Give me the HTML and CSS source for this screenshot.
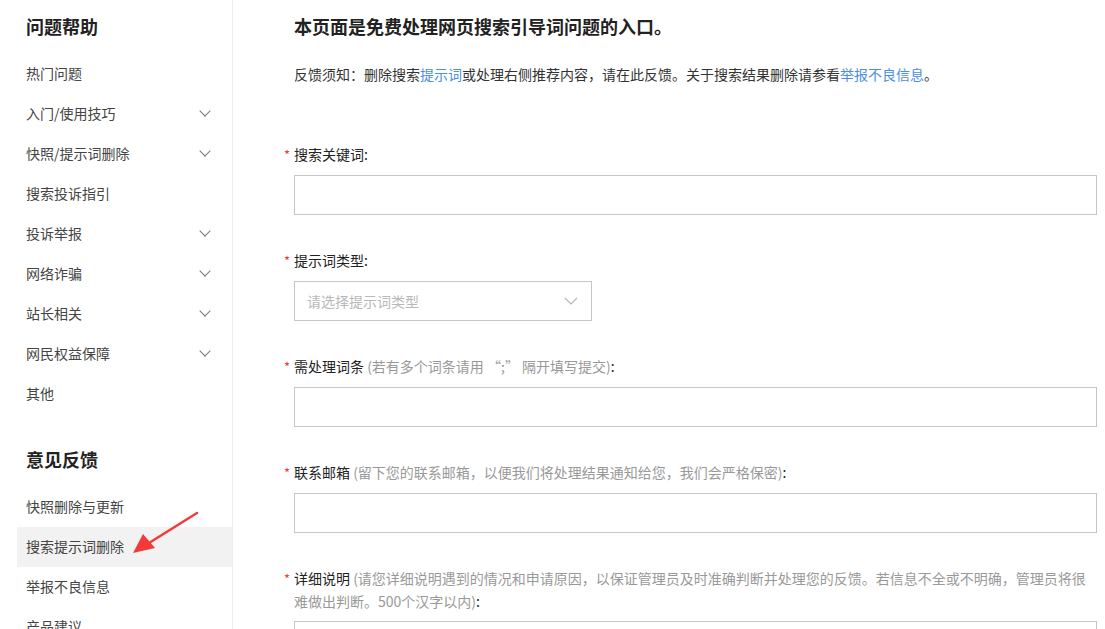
FILE: index.html
```html
<!DOCTYPE html>
<html>
<head>
    <meta charset="utf-8">
    <meta name="viewport" content="width=device-width, initial-scale=1.0">
    <link rel="stylesheet" href="styles.css">
</head>
<body>
    <div class="page">
        <!-- 左侧导航 -->
        <div class="sidebar">
            <div class="side-title">问题帮助</div>
            <ul class="side-list">
                <li>热门问题</li>
                <li>入门/使用技巧<span class="chev"></span></li>
                <li>快照/提示词删除<span class="chev"></span></li>
                <li>搜索投诉指引</li>
                <li>投诉举报<span class="chev"></span></li>
                <li>网络诈骗<span class="chev"></span></li>
                <li>站长相关<span class="chev"></span></li>
                <li>网民权益保障<span class="chev"></span></li>
                <li>其他</li>
            </ul>
            <div class="side-title second">意见反馈</div>
            <ul class="side-list">
                <li>快照删除与更新</li>
                <li class="active">搜索提示词删除</li>
                <li>举报不良信息</li>
                <li>产品建议</li>
            </ul>
            <svg class="arrow" width="70" height="45" viewBox="0 0 70 45" xmlns="http://www.w3.org/2000/svg">
                <path d="M66 2 L18 32" stroke="#f23a3a" stroke-width="2.5" stroke-linecap="round" fill="none" />
                <path d="M2 42 L12 23 L24 37 Z" fill="#f23a3a" />
            </svg>
        </div>

        <!-- 主体内容 -->
        <div class="main">
            <h1 class="main-title">本页面是免费处理网页搜索引导词问题的入口。</h1>
            <p class="notice">反馈须知：删除搜索<a href="#">提示词</a>或处理右侧推荐内容，请在此反馈。关于搜索结果删除请参看<a href="#">举报不良信息</a>。</p>

            <div class="form">
                <div class="form-item">
                    <div class="label"><span class="req">*</span>搜索关键词:</div>
                    <div class="input"></div>
                </div>
                <div class="form-item">
                    <div class="label"><span class="req">*</span>提示词类型:</div>
                    <div class="select">
                        <span>请选择提示词类型</span>
                        <svg width="14" height="8" viewBox="0 0 14 8" xmlns="http://www.w3.org/2000/svg">
                            <path d="M1 1 L7 7 L13 1" stroke="#b5b5b5" stroke-width="1.2" fill="none" />
                        </svg>
                    </div>
                </div>
                <div class="form-item">
                    <div class="label"><span class="req">*</span>需处理词条 <span class="hint">(若有多个词条请用 “;” 隔开填写提交)</span>:</div>
                    <div class="input"></div>
                </div>
                <div class="form-item">
                    <div class="label"><span class="req">*</span>联系邮箱 <span class="hint">(留下您的联系邮箱，以便我们将处理结果通知给您，我们会严格保密)</span>:</div>
                    <div class="input"></div>
                </div>
                <div class="form-item">
                    <div class="label"><span class="req">*</span>详细说明 <span class="hint">(请您详细说明遇到的情况和申请原因，以保证管理员及时准确判断并处理您的反馈。若信息不全或不明确，管理员将很难做出判断。500个汉字以内)</span>:</div>
                    <div class="input tall"></div>
                </div>
            </div>
        </div>
    </div>
</body>
</html>
```

FILE: styles.css
```css
/* 全局样式 */
body {
    font-family: "Microsoft YaHei", "Noto Sans CJK SC", "Liberation Sans", sans-serif;
    margin: 0;
    padding: 0;
    background-color: #fff;
    color: #333;
    font-size: 14px;
}

.page {
    display: flex;
    height: 629px;
    overflow: hidden;
}

/* 左侧导航 */
.sidebar {
    position: relative;
    width: 232px;
    flex-shrink: 0;
    border-right: 1px solid #ededed;
}

.side-title {
    margin: 14px 0 16px 26px;
    font-size: 18px;
    line-height: 24px;
    font-weight: bold;
    color: #222;
}

    .side-title.second {
        margin-top: 32px;
    }

.side-list {
    list-style: none;
    margin: 0 0 0 17px;
    padding: 0 0 1px 0;
}

    .side-list li {
        display: flex;
        align-items: center;
        justify-content: space-between;
        height: 40px;
        padding: 0 23px 2px 9px;
        box-sizing: border-box;
        color: #444;
    }

        .side-list li.active {
            background-color: #f2f2f2;
        }

.chev {
    width: 7px;
    height: 7px;
    border-right: 1.2px solid #777;
    border-bottom: 1.2px solid #777;
    transform: translateY(-2px) rotate(45deg);
}

.arrow {
    position: absolute;
    left: 131px;
    top: 511px;
}

/* 主体内容 */
.main {
    flex: 1;
    padding: 0 8px 0 61px;
}

.main-title {
    margin: 0;
    font-size: 18px;
    line-height: 53px;
    font-weight: bold;
    color: #222;
}

.notice {
    margin: 0;
    line-height: 42px;
    font-size: 14px;
    color: #333;
}

    .notice a {
        color: #4a8fe2;
        text-decoration: none;
    }

.form {
    padding-top: 49px;
}

.form-item {
    margin-bottom: 35px;
}

.label {
    line-height: 22px;
    margin-top: -1px;
    margin-bottom: 9px;
    color: #222;
}

.req {
    display: inline-block;
    width: 10px;
    margin-left: -10px;
    color: #e23c3c;
    font-size: 13px;
    line-height: 22px;
}

.hint {
    color: #999;
}

.input {
    height: 38px;
    border: 1px solid #c6c6c6;
}

    .input.tall {
        height: 100px;
    }

.select {
    width: 271px;
    height: 38px;
    border: 1px solid #c6c6c6;
    display: flex;
    align-items: center;
    justify-content: space-between;
    padding: 0 13px 0 12px;
    color: #b8b8b8;
}
```
